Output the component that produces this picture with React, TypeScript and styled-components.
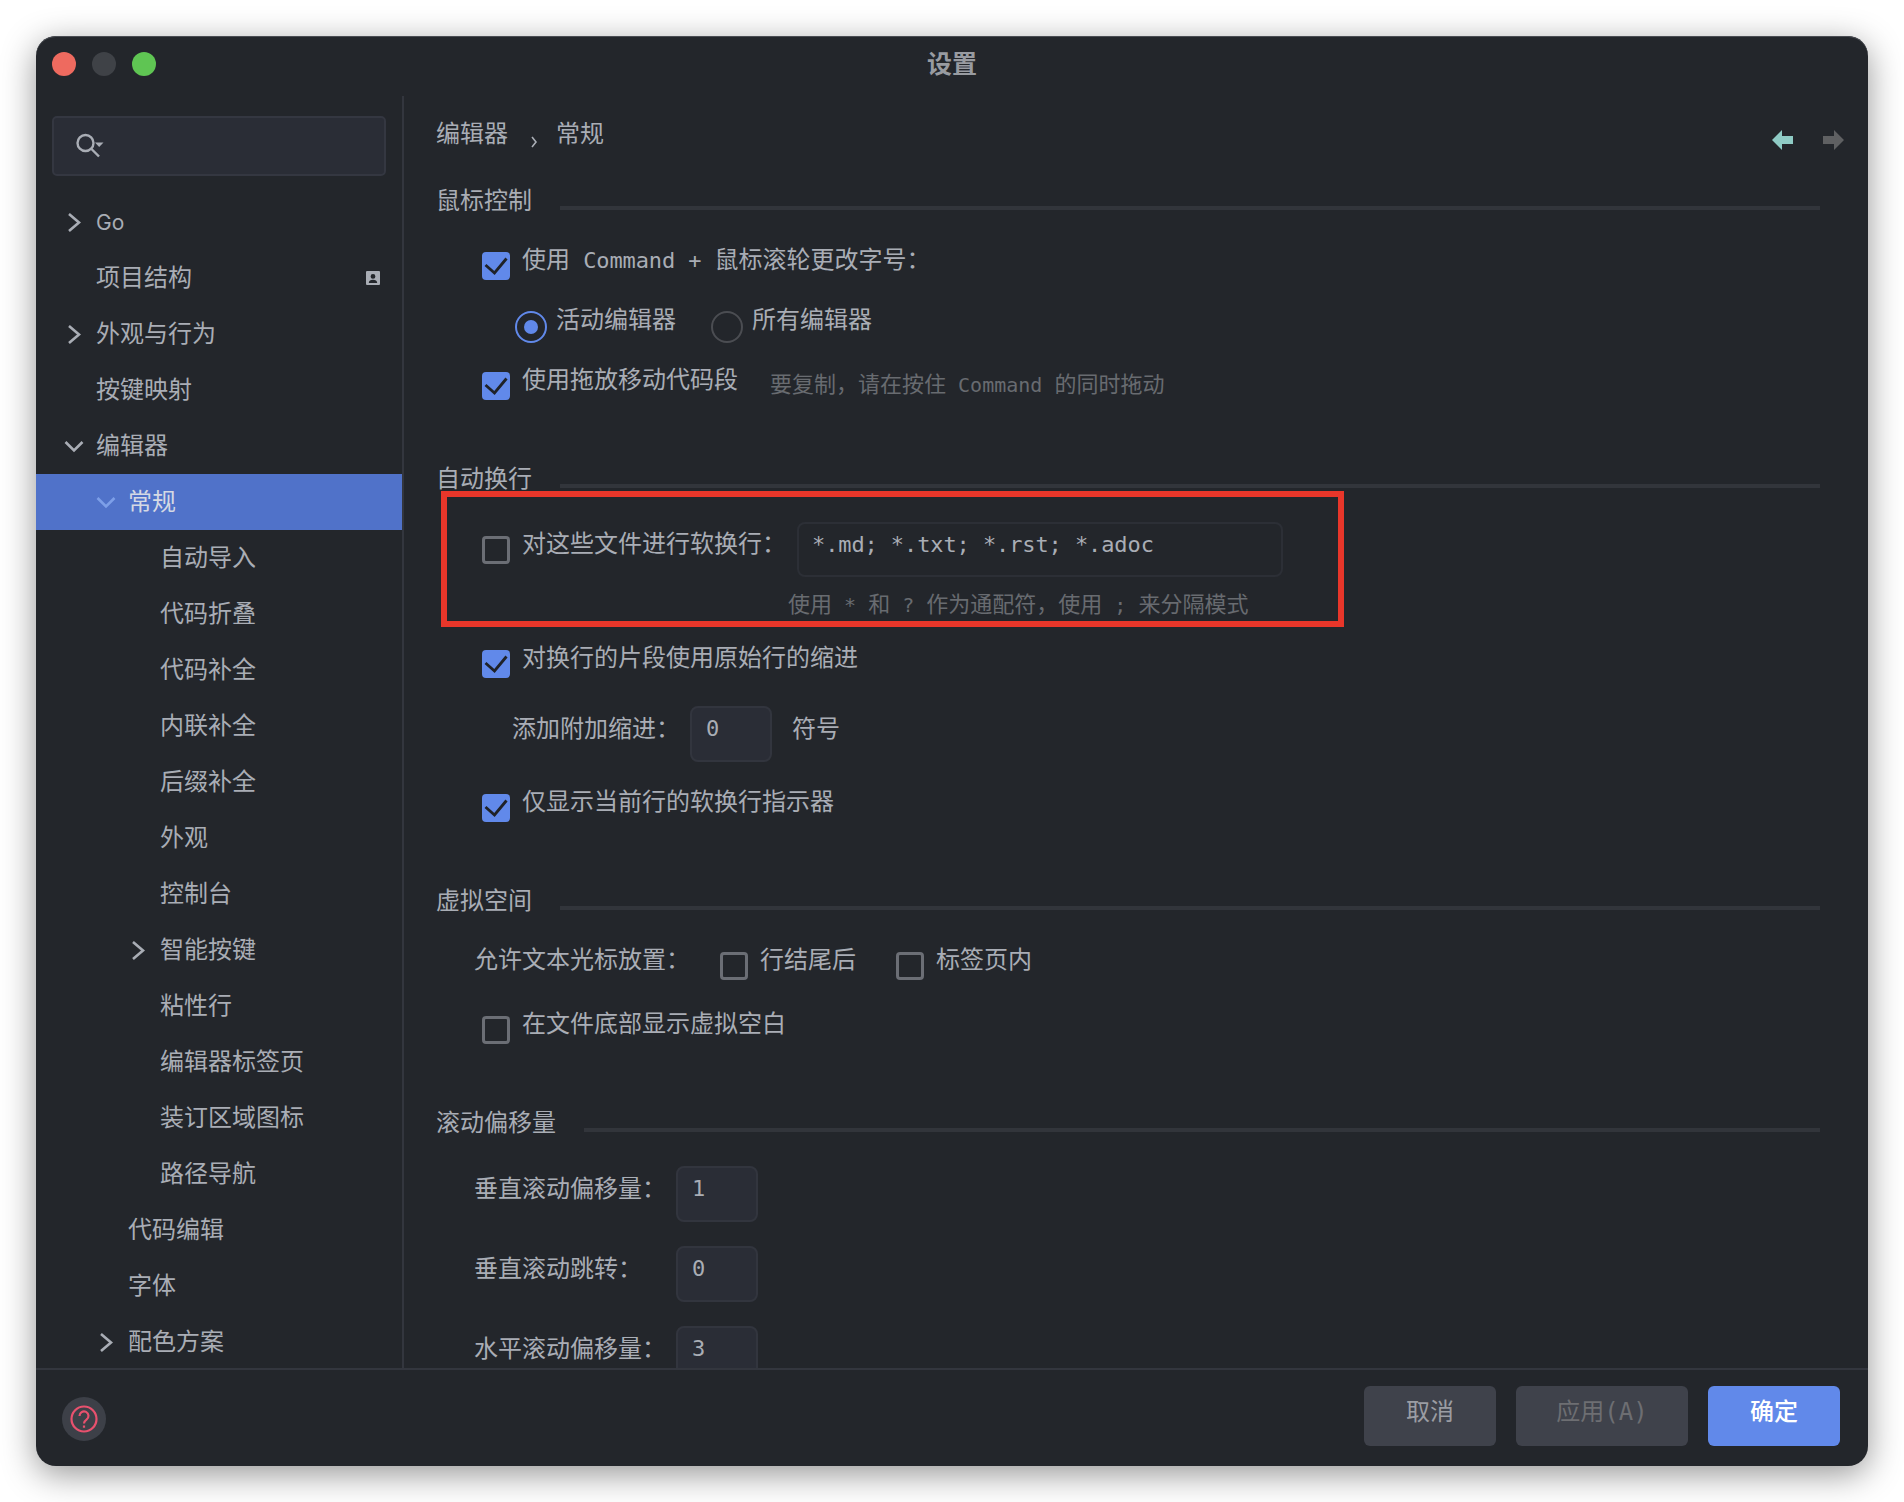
import React from "react";
import styled, { createGlobalStyle } from "styled-components";

const Global = createGlobalStyle`
  html, body { margin: 0; padding: 0; background: #fff; }
  #root { min-height: 1502px; padding: 36px; box-sizing: border-box; }
  * { box-sizing: border-box; }
`;

const CJK = `"Noto Sans CJK SC"`;
const UI = `Inter, ${CJK}, sans-serif`;
const MONO = `"DejaVu Sans Mono", ${CJK}, monospace`;

const Window = styled.div`
  width: 1832px; height: 1430px; background: #23262b; border-radius: 20px;
  box-shadow: 0 8px 34px rgba(0,0,0,.42), inset 0 1px 0 #4a4d53;
  display: flex; flex-direction: column; overflow: hidden;
`;
const TitleBar = styled.div`
  position: relative; height: 60px; flex: none; display: flex; align-items: center; justify-content: center;
  color: #989ba1; font: 700 25px/32px ${UI}; padding-bottom: 5px;
`;
const Lights = styled.div`
  position: absolute; left: 16px; top: 16px; display: flex; gap: 16px;
`;
const Light = styled.span<{ $c: string }>`
  width: 24px; height: 24px; border-radius: 50%; background: ${p => p.$c};
`;
const Main = styled.div`
  flex: 1; min-height: 0; display: flex; overflow: hidden;
`;
const Sidebar = styled.div`
  width: 368px; flex: none; border-right: 2px solid #33363e; padding-top: 20px; overflow: hidden;
`;
const Search = styled.div`
  margin-left: 16px; width: 334px; height: 60px; background: #2a2d36; border: 2px solid #343741; border-radius: 5px;
  display: flex; align-items: center; padding-left: 22px;
`;
const Tree = styled.div` margin-top: 18px; `;
const TreeRow = styled.div<{ $level: number; $sel?: boolean }>`
  height: 56px; display: flex; align-items: center; position: relative;
  padding-left: ${p => 60 + p.$level * 32}px; padding-right: 22px;
  font: 24px/32px ${UI}; color: ${p => (p.$sel ? "#d5d9e4" : "#a9adb5")};
  background: ${p => (p.$sel ? "#5072c9" : "transparent")};
`;
const Chevron = styled.svg<{ $level: number }>`
  position: absolute; left: ${p => 28 + p.$level * 32}px; top: 18px; width: 20px; height: 20px; fill: none;
  stroke: currentColor; stroke-width: 2.6;
`;
const RowLabel = styled.span<{ $latin?: boolean }>`
  flex: 1;
  font-size: ${p => (p.$latin ? 21 : 24)}px;
  position: relative; top: ${p => (p.$latin ? 1 : 0)}px;
`;

const Content = styled.div`
  flex: 1; min-width: 0; padding-top: 22px; padding-left: 32px; overflow: hidden;
  font: 22px/32px ${MONO}; color: #a9adb5;
`;
const Crumbs = styled.div`
  height: 32px; display: flex; align-items: center; padding-right: 24px; font: 24px/32px ${UI};
`;
const CrumbSep = styled.svg`
  width: 10px; height: 12px; margin: 15px 17px 0 21px; stroke: #a9adb5; stroke-width: 1.6; fill: none;
`;
const Arrows = styled.div` margin-left: auto; display: flex; gap: 30px; margin-top: 12px; `;
const SectionHead = styled.div<{ $top: number }>`
  margin-top: ${p => p.$top}px; margin-right: 48px; height: 32px; padding-top: 1px; display: flex; gap: 28px; font: 24px/32px ${UI};
`;
const SectionLine = styled.div`
  flex: 1; height: 4px; margin-top: 21px; background: #32353b;
`;
const Row = styled.div<{ $top: number; $left?: number }>`
  margin-top: ${p => p.$top}px; margin-left: ${p => p.$left ?? 46}px;
  display: flex; align-items: flex-start; height: 32px;
`;
const FieldRow = styled(Row)` height: 56px; `;
const Label = styled.span`
  font: 24px/32px ${MONO}; font-size: 22px; white-space: pre;
`;
const CnLabel = styled(Label)` font-size: 24px; `;
const Latin = styled.span` font-size: 22px; letter-spacing: -0.1px; `;
const Small = styled.span` font-size: 20px; `;
const Hint = styled.span<{ $gap?: number }>`
  font: 22px/32px ${MONO}; color: #686b70; white-space: pre; margin-left: ${p => p.$gap ?? 0}px;
  position: relative; top: 5px;
`;
const Box = styled.span<{ $on?: boolean; $gap?: number }>`
  flex: none; width: 28px; height: 28px; margin-top: 8px; margin-left: ${p => p.$gap ?? 0}px; margin-right: 12px; border-radius: 4px;
  display: flex; align-items: center; justify-content: center;
  background: ${p => (p.$on ? "#6189ea" : "transparent")};
  border: ${p => (p.$on ? "none" : "3px solid #6b6e75")};
`;
const Radio = styled.span<{ $on?: boolean; $gap?: number }>`
  flex: none; width: 32px; height: 32px; margin-top: 7px; margin-left: ${p => p.$gap ?? 0}px; margin-right: 9px; border-radius: 50%;
  display: flex; align-items: center; justify-content: center;
  border: 2px solid ${p => (p.$on ? "#6189ea" : "#4b4d52")};
`;
const Dot = styled.span` width: 14px; height: 14px; border-radius: 50%; background: #6189ea; `;
const RedBox = styled.div`
  margin: -3px 0 0 5px; width: 903px; height: 136px; border: 6px solid #e8362a; padding: 25px 0 0 35px;
`;
const RedRow = styled.div` display: flex; align-items: flex-start; height: 55px; `;
const RedLead = styled.div` display: flex; align-items: flex-start; padding-top: 6px; `;
const TextInput = styled.div`
  width: 486px; height: 55px; margin-left: 11px; border: 2px solid #2c2f36; border-radius: 8px;
  padding: 5px 13px; font: 22px/32px ${MONO}; white-space: pre; letter-spacing: -0.1px;
`;
const HintLine = styled.div`
  margin: 12px 0 0 306px; font: 22px/32px ${MONO}; color: #686b70; white-space: pre;
`;
const NumInput = styled.div`
  width: 82px; height: 56px; flex: none; background: #2a2d36; border: 2px solid #32353e; border-radius: 8px;
  padding: 5px 14px; font: 22px/32px ${MONO};
`;
const FieldLabel = styled(CnLabel)<{ $w: number }>` width: ${p => p.$w}px; margin-top: 7px; `;
const Unit = styled(CnLabel)` margin: 7px 0 0 20px; `;

const Footer = styled.div`
  height: 98px; flex: none; border-top: 2px solid #33363e; display: flex; align-items: flex-start;
  padding: 16px 28px 0 26px; font: 24px/32px ${UI};
`;
const Help = styled.div`
  width: 44px; height: 44px; margin-top: 11px; border-radius: 50%; background: #3d4048;
  display: flex; align-items: center; justify-content: center;
`;
const Spacer = styled.div` flex: 1; `;
const Btn = styled.div<{ $w: number; $bg: string; $c: string; $gap?: number; $bold?: boolean }>`
  width: ${p => p.$w}px; height: 60px; margin-left: ${p => p.$gap ?? 0}px; background: ${p => p.$bg}; color: ${p => p.$c};
  border-radius: 6px; display: flex; align-items: center; justify-content: center; padding-bottom: 8px;
  font-family: ${MONO}; font-size: 24px; font-weight: ${p => (p.$bold ? 500 : 400)};
`;

const tree: { t: string; l: number; c?: "r" | "d"; sel?: boolean; badge?: boolean; latin?: boolean }[] = [
  { t: "Go", l: 0, c: "r", latin: true },
  { t: "项目结构", l: 0, badge: true },
  { t: "外观与行为", l: 0, c: "r" },
  { t: "按键映射", l: 0 },
  { t: "编辑器", l: 0, c: "d" },
  { t: "常规", l: 1, c: "d", sel: true },
  { t: "自动导入", l: 2 },
  { t: "代码折叠", l: 2 },
  { t: "代码补全", l: 2 },
  { t: "内联补全", l: 2 },
  { t: "后缀补全", l: 2 },
  { t: "外观", l: 2 },
  { t: "控制台", l: 2 },
  { t: "智能按键", l: 2, c: "r" },
  { t: "粘性行", l: 2 },
  { t: "编辑器标签页", l: 2 },
  { t: "装订区域图标", l: 2 },
  { t: "路径导航", l: 2 },
  { t: "代码编辑", l: 1 },
  { t: "字体", l: 1 },
  { t: "配色方案", l: 1, c: "r" },
];

const CheckBox = ({ on, gap }: { on?: boolean; gap?: number }) => (
  <Box $on={on} $gap={gap}>
    {on && (
      <svg width="28" height="28" viewBox="0 0 28 28" fill="none" stroke="#1f2228" strokeWidth="2.8">
        <path d="M3.5 13 L12.5 21 L24.5 6.5" />
      </svg>
    )}
  </Box>
);

const Section = ({ top, children }: { top: number; children: string }) => (
  <SectionHead $top={top}>
    <span>{children}</span>
    <SectionLine />
  </SectionHead>
);

export default function App() {
  return (
    <>
      <Global />
      <Window>
        <TitleBar>
          <Lights>
            <Light $c="#ee6a5f" />
            <Light $c="#3f4247" />
            <Light $c="#5fc553" />
          </Lights>
          设置
        </TitleBar>
        <Main>
          <Sidebar>
            <Search>
              <svg width="30" height="26" viewBox="0 0 30 26" fill="none">
                <circle cx="9.5" cy="10" r="8" stroke="#a9adb5" strokeWidth="2.4" />
                <path d="M15.5 16 L23 23.5" stroke="#a9adb5" strokeWidth="2.4" />
                <path d="M19 9.5 H27.5 L23.2 14 Z" fill="#a9adb5" />
              </svg>
            </Search>
            <Tree>
              {tree.map(r => (
                <TreeRow key={r.t} $level={r.l} $sel={r.sel}>
                  {r.c && (
                    <Chevron $level={r.l} viewBox="0 0 20 20" style={r.sel ? { color: "#7d9fe8" } : undefined}>
                      <path d={r.c === "r" ? "M5 2 L15 10.5 L5 19" : "M1.5 6 L10 14.5 L18.5 6"} />
                    </Chevron>
                  )}
                  <RowLabel $latin={r.latin}>{r.t}</RowLabel>
                  {r.badge && (
                    <svg width="14" height="14" viewBox="0 0 14 14">
                      <path fillRule="evenodd" fill="#a9adb5" d="M1 0 H13 a1 1 0 0 1 1 1 V13 a1 1 0 0 1 -1 1 H1 a1 1 0 0 1 -1 -1 V1 a1 1 0 0 1 1 -1 Z M7 3 a2.4 2.4 0 1 0 0 4.8 a2.4 2.4 0 1 0 0 -4.8 Z M2.8 12 H11.2 C11.2 9.8 9.4 8.8 7 8.8 C4.6 8.8 2.8 9.8 2.8 12 Z" />
                    </svg>
                  )}
                </TreeRow>
              ))}
            </Tree>
          </Sidebar>
          <Content>
            <Crumbs>
              <span>编辑器</span>
              <CrumbSep viewBox="0 0 10 12"><path d="M3 1 L7 6 L3 11" /></CrumbSep>
              <span>常规</span>
              <Arrows>
                <svg width="21" height="20" viewBox="0 0 21 20"><path d="M0 10 L10 0 V6 H21 V14 H10 V20 Z" fill="#8fcbc5" /></svg>
                <svg width="21" height="20" viewBox="0 0 21 20"><path d="M21 10 L11 0 V6 H0 V14 H11 V20 Z" fill="#5f6062" /></svg>
              </Arrows>
            </Crumbs>

            <Section top={34}>鼠标控制</Section>
            <Row $top={28}>
              <CheckBox on />
              <CnLabel>使用<Latin> Command + </Latin>鼠标滚轮更改字号：</CnLabel>
            </Row>
            <Row $top={28} $left={79}>
              <Radio $on><Dot /></Radio>
              <CnLabel>活动编辑器</CnLabel>
              <Radio $gap={35} />
              <CnLabel>所有编辑器</CnLabel>
            </Row>
            <Row $top={28}>
              <CheckBox on />
              <CnLabel>使用拖放移动代码段</CnLabel>
              <Hint $gap={32}>要复制，请在按住<Small> Command </Small>的同时拖动</Hint>
            </Row>

            <Section top={66}>自动换行</Section>
            <RedBox>
              <RedRow>
                <RedLead>
                  <CheckBox />
                  <CnLabel>对这些文件进行软换行：</CnLabel>
                </RedLead>
                <TextInput>*.md; *.txt; *.rst; *.adoc</TextInput>
              </RedRow>
              <HintLine>使用<Small> * </Small>和<Small> ? </Small>作为通配符，使用<Small> ; </Small>来分隔模式</HintLine>
            </RedBox>
            <Row $top={15}>
              <CheckBox on />
              <CnLabel>对换行的片段使用原始行的缩进</CnLabel>
            </Row>
            <FieldRow $top={32} $left={76}>
              <FieldLabel $w={178}>添加附加缩进：</FieldLabel>
              <NumInput>0</NumInput>
              <Unit>符号</Unit>
            </FieldRow>
            <Row $top={24}>
              <CheckBox on />
              <CnLabel>仅显示当前行的软换行指示器</CnLabel>
            </Row>

            <Section top={66}>虚拟空间</Section>
            <Row $top={28} $left={38}>
              <CnLabel>允许文本光标放置：</CnLabel>
              <CheckBox gap={30} />
              <CnLabel>行结尾后</CnLabel>
              <CheckBox gap={40} />
              <CnLabel>标签页内</CnLabel>
            </Row>
            <Row $top={32}>
              <CheckBox />
              <CnLabel>在文件底部显示虚拟空白</CnLabel>
            </Row>

            <Section top={66}>滚动偏移量</Section>
            <FieldRow $top={28} $left={38}>
              <FieldLabel $w={202}>垂直滚动偏移量：</FieldLabel>
              <NumInput>1</NumInput>
            </FieldRow>
            <FieldRow $top={24} $left={38}>
              <FieldLabel $w={202}>垂直滚动跳转：</FieldLabel>
              <NumInput>0</NumInput>
            </FieldRow>
            <FieldRow $top={24} $left={38}>
              <FieldLabel $w={202}>水平滚动偏移量：</FieldLabel>
              <NumInput>3</NumInput>
            </FieldRow>
          </Content>
        </Main>
        <Footer>
          <Help>
            <svg width="30" height="30" viewBox="0 0 30 30" fill="none" stroke="#e8516e" strokeWidth="2.2">
              <circle cx="15" cy="15" r="12.5" />
              <path d="M10.5 12 a4.5 4.5 0 1 1 7 3.6 c-1.6 1.1 -2.5 2 -2.5 3.9" />
              <path d="M15 21.5 v2.2" />
            </svg>
          </Help>
          <Spacer />
          <Btn $w={132} $bg="#3f424b" $c="#9b9da3">取消</Btn>
          <Btn $w={172} $gap={20} $bg="#3f424b" $c="#6d6e72">应用(A)</Btn>
          <Btn $w={132} $gap={20} $bg="#6189ea" $c="#fff" $bold>确定</Btn>
        </Footer>
      </Window>
    </>
  );
}
